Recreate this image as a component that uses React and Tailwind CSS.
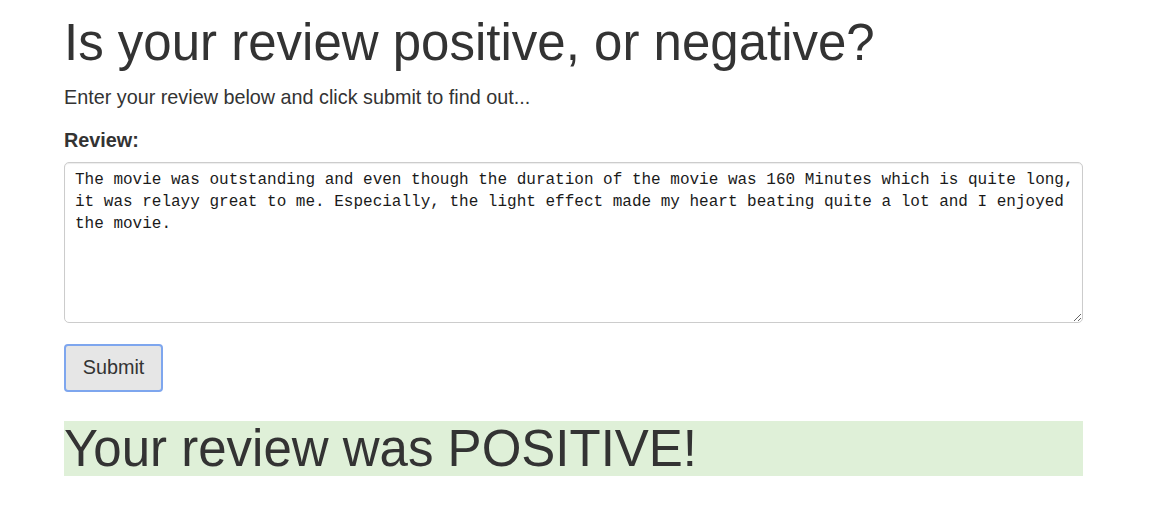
import React from 'react';

const review =
  'The movie was outstanding and even though the duration of the movie was 160 Minutes which is quite long, it was relayy great to me. Especially, the light effect made my heart beating quite a lot and I enjoyed the movie.';

const App = () => {
  return (
    <div className="min-h-screen bg-white pl-[64px] font-['Liberation_Sans',Arial,sans-serif] text-[#333]">
      <div className="w-[1019px] flex flex-col">
        <h1 className="mt-[15px] text-[51px] leading-[55px] font-normal">Is your review positive, or negative?</h1>
        <p className="mt-[13px] text-[19.8px] leading-[28px]">Enter your review below and click submit to find out...</p>
        <label className="mt-[15px] text-[19.8px] leading-[28px] font-bold">Review:</label>
        <textarea
          className="mt-[8px] h-[161px] w-full rounded-[5px] border border-[#ccc] bg-white pl-[10px] pr-[6px] pt-[6px] font-['Liberation_Mono','DejaVu_Sans_Mono',monospace] text-[16px] leading-[22px] text-[#1a1a1a] shadow-[inset_0_1px_1px_rgba(0,0,0,0.075)] outline-none"
          defaultValue={review}
        />
        <div className="mt-[21px]">
          <button className="h-[48px] w-[99px] rounded-[4px] border-2 border-[#7ea6ee] bg-[#e6e6e6] text-[19.8px] text-[#333]">
            Submit
          </button>
        </div>
        <h1 className="mt-[29px] bg-[#dff0d8] text-[51px] leading-[55px] font-normal">Your review was POSITIVE!</h1>
      </div>
    </div>
  );
};

export default App;
